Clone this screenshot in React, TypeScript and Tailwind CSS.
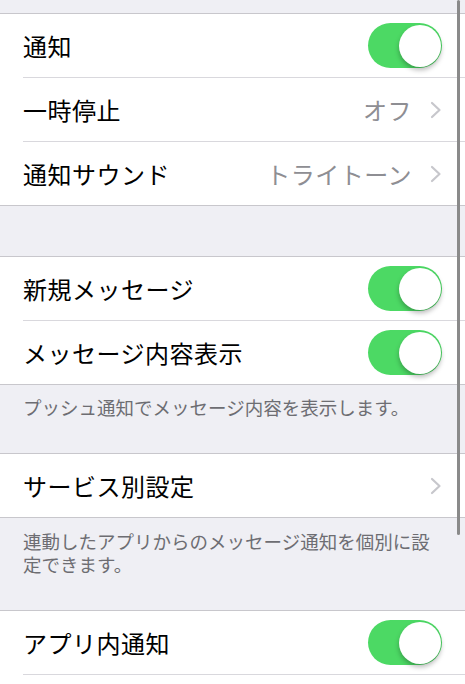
import React from 'react'

type Row = { label: string; toggle?: boolean; value?: string; chevron?: boolean }

const font = { fontFamily: "'Noto Sans CJK JP', 'Noto Sans', sans-serif" }

function Toggle() {
  return (
    <div className="relative w-[74px] h-[45px] rounded-full bg-[#4cd964] shrink-0">
      <div className="absolute right-[1px] top-[1.5px] w-[42px] h-[42px] rounded-full bg-white shadow-[0_3px_5px_rgba(0,0,0,0.28)]" />
    </div>
  )
}

function Chevron() {
  return (
    <svg width="12" height="18" viewBox="0 0 12 18" className="shrink-0">
      <polyline points="2,2 9.5,9 2,16" fill="none" stroke="#c7c7cc" strokeWidth="2.2" strokeLinecap="round" strokeLinejoin="round" />
    </svg>
  )
}

function Group({ rows }: { rows: Row[] }) {
  return (
    <div className="bg-white border-y border-[#c8c7cc]">
      {rows.map((r, i) => (
        <div key={i} className="pl-[23px]">
          <div
            className={
              'h-[63px] flex items-center justify-between pr-[23px] ' +
              (i < rows.length - 1 ? 'border-b border-[#d9d8dd] h-[64px]' : '')
            }
          >
            <span className="text-[24px] text-black tracking-[0.5px]">{r.label}</span>
            {r.toggle && <Toggle />}
            {r.chevron && (
              <div className="flex items-center gap-[18px]">
                {r.value && <span className="text-[24px] text-[#8e8e93] tracking-[0.5px]">{r.value}</span>}
                <Chevron />
              </div>
            )}
          </div>
        </div>
      ))}
    </div>
  )
}

function Footer({ text, className }: { text: string; className: string }) {
  return (
    <p className={'px-[23px] text-[18.5px] leading-[23px] text-[#6d6d72] ' + className}>{text}</p>
  )
}

export default function App() {
  return (
    <div style={font} className="relative w-[465px] h-[684px] overflow-hidden bg-[#efeff4]">
      <div className="h-[13px]" />
      <Group
        rows={[
          { label: '通知', toggle: true },
          { label: '一時停止', value: 'オフ', chevron: true },
          { label: '通知サウンド', value: 'トライトーン', chevron: true },
        ]}
      />
      <div className="h-[50px]" />
      <Group
        rows={[
          { label: '新規メッセージ', toggle: true },
          { label: 'メッセージ内容表示', toggle: true },
        ]}
      />
      <Footer className="pt-[11px] pb-[34px]" text="プッシュ通知でメッセージ内容を表示します。" />
      <Group rows={[{ label: 'サービス別設定', chevron: true }]} />
      <Footer className="pt-[12px] pb-[34px]" text="連動したアプリからのメッセージ通知を個別に設定できます。" />
      <Group
        rows={[
          { label: 'アプリ内通知', toggle: true },
          { label: '', toggle: true },
        ]}
      />
      <div className="absolute right-[5px] top-0 w-[3px] h-[535px] rounded-full bg-[#8a8a8a]" />
    </div>
  )
}
